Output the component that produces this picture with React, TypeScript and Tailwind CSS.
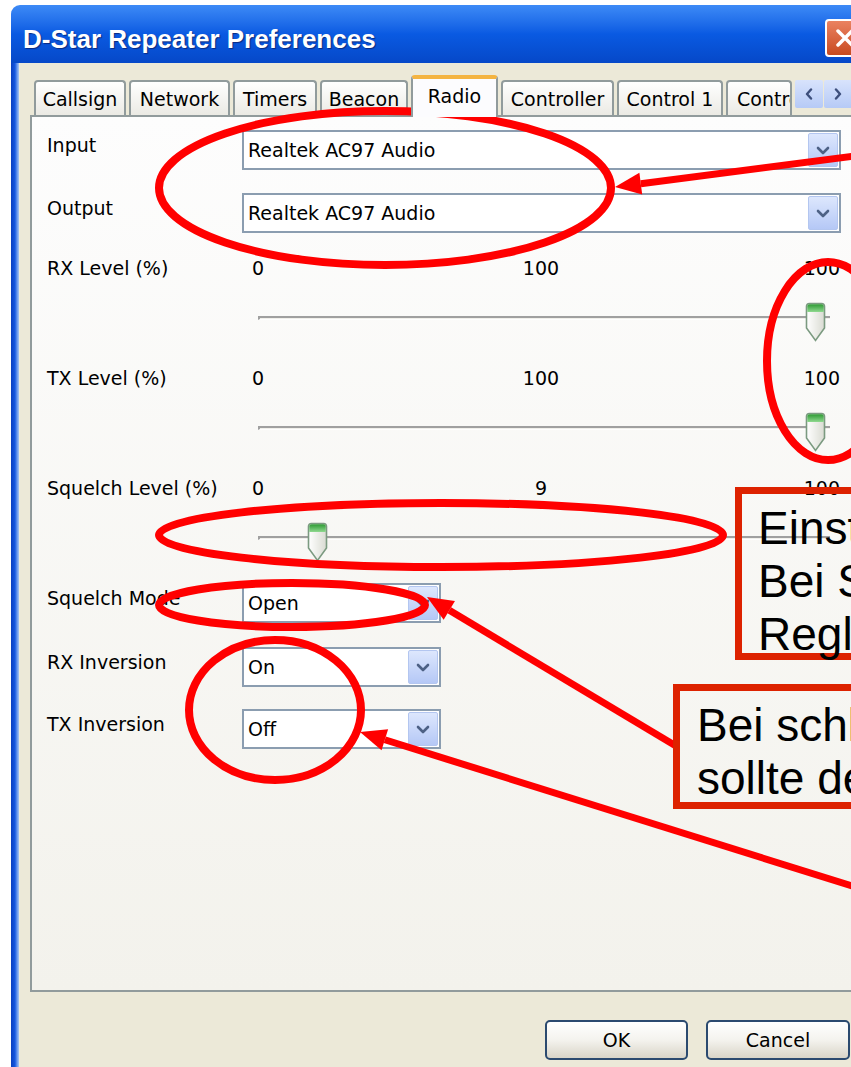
type Pt = [number, number];

type Tab = { label: string; width: string; active?: boolean; clipped?: boolean };

const tabs: Tab[] = [
  { label: "Callsign", width: "w-[92px]" },
  { label: "Network", width: "w-[101px]" },
  { label: "Timers", width: "w-[84px]" },
  { label: "Beacon", width: "w-[88px]" },
  { label: "Radio", width: "w-[87px]", active: true },
  { label: "Controller", width: "w-[113px]" },
  { label: "Control 1", width: "w-[106px]" },
  { label: "Control 2", width: "w-[66px]", clipped: true },
];

function Chevron() {
  return (
    <svg width="14" height="9" viewBox="0 0 14 9">
      <path d="M2 2 L7 7 L12 2" fill="none" stroke="#4d6185" strokeWidth="2.6" strokeLinecap="round" strokeLinejoin="round" />
    </svg>
  );
}

function Combo({ value, wide }: { value: string; wide?: boolean }) {
  return (
    <div
      className={`flex h-[40px] items-center justify-between border-2 border-[#8b9db0] bg-white pl-[4px] pr-[1px] ${
        wide ? "w-[599px]" : "w-[199px]"
      }`}
    >
      <span className="leading-[22px]">{value}</span>
      <span className="flex h-[34px] w-[30px] items-center justify-center rounded-[2px] border border-[#b3c6f0] bg-linear-to-b from-[#dde7fd] to-[#b5c8f6]">
        <Chevron />
      </span>
    </div>
  );
}

function ComboRow({ label, value, wide, className = "" }: { label: string; value: string; wide?: boolean; className?: string }) {
  return (
    <div className={`flex ${className}`}>
      <div className="w-[195px] pt-[4px] leading-[22px]">{label}</div>
      <Combo value={value} wide={wide} />
    </div>
  );
}

function Thumb({ left }: { left: number }) {
  return (
    <svg className="absolute top-[45px]" style={{ left }} width="21" height="40" viewBox="0 0 21 40">
      <defs>
        <linearGradient id="thumbBody" x1="0" x2="1" y1="0" y2="0">
          <stop offset="0" stopColor="#ffffff" />
          <stop offset="1" stopColor="#d9dbd2" />
        </linearGradient>
        <linearGradient id="thumbCap" x1="0" x2="0" y1="0" y2="1">
          <stop offset="0" stopColor="#2f9a35" />
          <stop offset="1" stopColor="#8fd98f" />
        </linearGradient>
      </defs>
      <path
        d="M1.5 4.5 Q1.5 1.5 4.5 1.5 H16.5 Q19.5 1.5 19.5 4.5 V26 L10.5 38.5 L1.5 26 Z"
        fill="url(#thumbBody)"
        stroke="#7b9a80"
        strokeWidth="1.6"
      />
      <path d="M2.3 4.5 Q2.3 2.3 4.5 2.3 H16.5 Q18.7 2.3 18.7 4.5 V10 H2.3 Z" fill="url(#thumbCap)" />
    </svg>
  );
}

function SliderRow({ label, value, mid, className = "" }: { label: string; value: number; mid: string; className?: string }) {
  // thumb centre runs from 26px (0) to 573px (100) inside the control column
  const centre = 26 + (value / 100) * 547;
  return (
    <div className={`flex ${className}`}>
      <div className="w-[195px] leading-[22px]">{label}</div>
      <div className="relative w-[599px]">
        <div className="grid w-[598px] grid-cols-3 leading-[22px]">
          <span className="pl-[10px]">0</span>
          <span className="text-center">{mid}</span>
          <span className="text-right">100</span>
        </div>
        <div className="ml-[16px] mt-[37px] h-[4px] w-[572px] border-l-2 border-t-2 border-[#a0a0a0] border-b border-b-white bg-[#f1f0eb]" />
        <Thumb left={centre - 10.5} />
      </div>
    </div>
  );
}

function Spin({ dir }: { dir: "left" | "right" }) {
  return (
    <div className="flex h-[28px] w-[28px] items-center justify-center rounded-[2px] bg-linear-to-b from-[#d8e3fc] to-[#b6caf6]">
      <svg width="8" height="12" viewBox="0 0 8 12">
        <path
          d={dir === "left" ? "M6 1.5 L2 6 L6 10.5" : "M2 1.5 L6 6 L2 10.5"}
          fill="none"
          stroke="#3d4f7c"
          strokeWidth="2.4"
          strokeLinecap="round"
          strokeLinejoin="round"
        />
      </svg>
    </div>
  );
}

function XpButton({ label, width }: { label: string; width: string }) {
  return (
    <button
      className={`${width} h-[40px] rounded-[5px] border-2 border-[#2b4a6f] bg-linear-to-b from-white via-[#f4f3ee] to-[#d9d5c8] leading-[22px]`}
    >
      {label}
    </button>
  );
}

function arrowHead(tip: Pt, tail: Pt, len = 26, half = 11) {
  const dx = tail[0] - tip[0];
  const dy = tail[1] - tip[1];
  const d = Math.hypot(dx, dy);
  const ux = dx / d;
  const uy = dy / d;
  const bx = tip[0] + ux * len;
  const by = tip[1] + uy * len;
  return {
    base: [bx, by] as Pt,
    points: `${tip[0]},${tip[1]} ${bx - uy * half},${by + ux * half} ${bx + uy * half},${by - ux * half}`,
  };
}

const arrows: { tip: Pt; tail: Pt }[] = [
  { tip: [615, 187], tail: [870, 154] },
  { tip: [427, 597], tail: [676, 746] },
  { tip: [360, 732], tail: [900, 901] },
];

const rings = [
  { cx: 385, cy: 188, rx: 226, ry: 77 },
  { cx: 828, cy: 361, rx: 61, ry: 99 },
  { cx: 441, cy: 535, rx: 282, ry: 32 },
  { cx: 292, cy: 605, rx: 133, ry: 22 },
  { cx: 275, cy: 710, rx: 86, ry: 70 },
];

function Markup() {
  return (
    <>
      <svg className="pointer-events-none absolute left-0 top-0" width="851" height="1067" viewBox="0 0 851 1067">
        {rings.map((r, i) => (
          <ellipse key={i} cx={r.cx} cy={r.cy} rx={r.rx} ry={r.ry} fill="none" stroke="#ff0000" strokeWidth="8" />
        ))}
        {arrows.map((a, i) => {
          const h = arrowHead(a.tip, a.tail);
          return (
            <g key={i}>
              <line x1={h.base[0]} y1={h.base[1]} x2={a.tail[0]} y2={a.tail[1]} stroke="#ff0000" strokeWidth="7" />
              <polygon points={h.points} fill="#ff0000" />
            </g>
          );
        })}
      </svg>
      <div className="absolute left-[735px] top-[487px] h-[173px] w-[420px] whitespace-nowrap border-[7px] border-[#dd2200] pl-[16px] pt-[8px] font-['Liberation_Sans',Arial,sans-serif] text-[46px] leading-[53px] text-black">
        <div>Einstellung Squelch-Level.</div>
        <div>Bei Squelch Mode Open hat</div>
        <div>Regler keine Wirkung</div>
      </div>
      <div className="absolute left-[673px] top-[684px] h-[125px] w-[460px] whitespace-nowrap border-[7px] border-[#dd2200] pl-[17px] pt-[8px] font-['Liberation_Sans',Arial,sans-serif] text-[46px] leading-[53px] text-black">
        <div>Bei schlechtem Signal</div>
        <div>sollte der Squelch aktiv sein</div>
      </div>
    </>
  );
}

export default function App() {
  return (
    <div className="relative h-[1067px] w-[851px] overflow-hidden bg-white font-['DejaVu_Sans',sans-serif] text-[19px] text-black">
      <div className="ml-[11px] mt-[5px] w-[880px]">
        {/* title bar */}
        <div className="flex h-[58px] items-start rounded-tl-[9px] rounded-tr-[9px] bg-linear-to-b from-[#3d8af6] via-[#0a5ae2] to-[#0648c8]">
          <div className="pl-[12px] pt-[19px] font-['Liberation_Sans',Arial,sans-serif] text-[26px] font-bold leading-[30px] text-white [text-shadow:1px_1px_1px_#0a2a80]">
            D-Star Repeater Preferences
          </div>
          <div className="ml-auto mr-[27px] mt-[14px] flex h-[38px] w-[39px] items-center justify-center rounded-[4px] border-2 border-white bg-linear-to-b from-[#ea8260] to-[#c84a1e]">
            <svg width="20" height="20" viewBox="0 0 20 20">
              <path d="M3 3 L17 17 M17 3 L3 17" stroke="white" strokeWidth="3.5" strokeLinecap="round" />
            </svg>
          </div>
        </div>

        <div className="flex bg-[#ece9d8]">
          <div className="w-[8px] shrink-0 bg-linear-to-r from-[#0a3fbf] via-[#1658e0] to-[#a9c6f3]" />
          <div className="flex flex-col pb-[20px] pl-[11px]">
            {/* tab strip */}
            <div className="flex h-[52px] items-end gap-[3px] pl-[4px]">
              {tabs.map((t) => (
                <div
                  key={t.label}
                  className={`${t.width} flex shrink-0 items-center overflow-hidden whitespace-nowrap rounded-t-[4px] border-2 border-b-0 border-[#919b9c] ${
                    t.active
                      ? "relative z-10 -mb-[2px] h-[42px] border-t-[4px] border-t-[#f4b441] bg-[#fcfcfe] pb-[4px]"
                      : "h-[35px] bg-linear-to-b from-white to-[#ebeae4] pt-[2px]"
                  } ${t.clipped ? "justify-start pl-[9px]" : "justify-center"}`}
                >
                  {t.label}
                </div>
              ))}
              <div className="mt-[17px] flex h-[28px] gap-[1px] self-start">
                <Spin dir="left" />
                <Spin dir="right" />
              </div>
            </div>

            {/* Radio page */}
            <div className="h-[877px] w-[828px] border-2 border-[#919b9c] bg-linear-to-b from-[#fdfdfd] to-[#f3f2ec] pl-[15px] pt-[13px]">
              <ComboRow label="Input" value="Realtek AC97 Audio" wide />
              <ComboRow label="Output" value="Realtek AC97 Audio" wide className="mt-[23px]" />
              <SliderRow label="RX Level (%)" value={100} mid="100" className="mt-[24px] h-[110px]" />
              <SliderRow label="TX Level (%)" value={100} mid="100" className="h-[110px]" />
              <SliderRow label="Squelch Level (%)" value={9} mid="9" className="h-[106px]" />
              <ComboRow label="Squelch Mode" value="Open" />
              <ComboRow label="RX Inversion" value="On" className="mt-[24px]" />
              <ComboRow label="TX Inversion" value="Off" className="mt-[22px]" />
            </div>

            <div className="ml-[515px] mt-[28px] flex gap-[18px]">
              <XpButton label="OK" width="w-[143px]" />
              <XpButton label="Cancel" width="w-[144px]" />
            </div>
          </div>
        </div>
      </div>
      <Markup />
    </div>
  );
}
